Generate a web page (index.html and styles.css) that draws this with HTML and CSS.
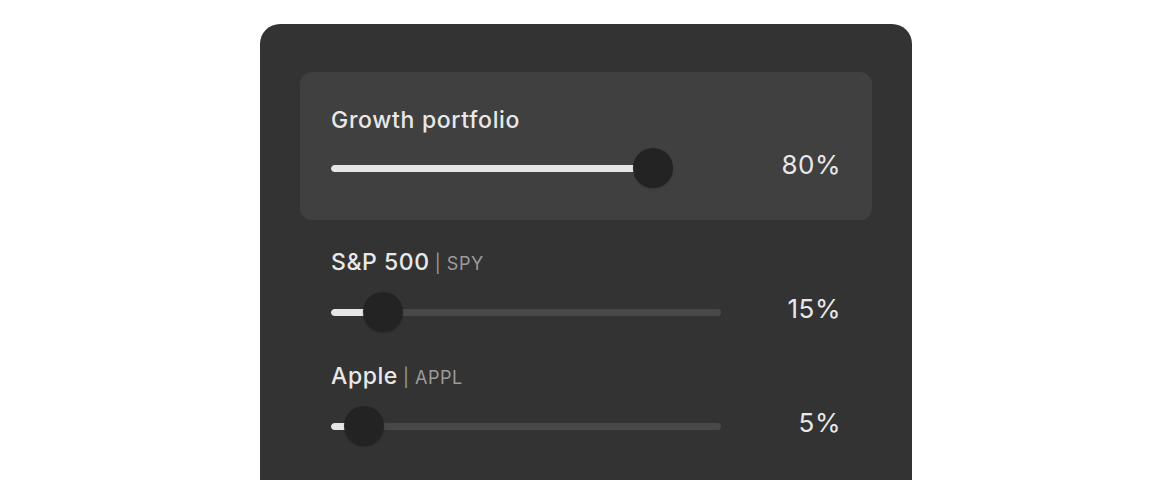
FILE: index.html
```html
<!DOCTYPE html>
<html>
<head>
<meta charset="utf-8">
<link rel="stylesheet" href="styles.css">
</head>
<body>
<div class="card">
  <div class="alloc alloc--active">
    <div class="alloc-title">Growth portfolio</div>
    <div class="alloc-body">
      <div class="slider">
        <div class="track"><div class="fill" style="width:322px"></div></div>
        <div class="thumb" style="left:302px"></div>
      </div>
      <div class="pct">80%</div>
    </div>
  </div>
  <div class="alloc">
    <div class="alloc-label"><span class="name">S&amp;P 500</span><span class="ticker">| SPY</span></div>
    <div class="alloc-body">
      <div class="slider">
        <div class="track"><div class="fill" style="width:52px"></div></div>
        <div class="thumb" style="left:32px"></div>
      </div>
      <div class="pct">15%</div>
    </div>
  </div>
  <div class="alloc">
    <div class="alloc-label"><span class="name">Apple</span><span class="ticker">| APPL</span></div>
    <div class="alloc-body">
      <div class="slider">
        <div class="track"><div class="fill" style="width:33px"></div></div>
        <div class="thumb" style="left:13px"></div>
      </div>
      <div class="pct">5%</div>
    </div>
  </div>
</div>
</body>
</html>
```

FILE: styles.css
```css
* { box-sizing: border-box; }
html, body { margin: 0; padding: 0; background: #ffffff; }
body {
  font-family: Inter, "Noto Sans", sans-serif;
  overflow: hidden;
  height: 480px;
}
.card {
  margin: 24px 0 0 260px;
  width: 652px;
  height: 456px;
  background: #333333;
  border-radius: 20px 20px 0 0;
  padding: 48px 40px 0;
  display: flex;
  flex-direction: column;
  gap: 28px;
}
.alloc {
  display: flex;
  flex-direction: column;
  gap: 14px;
  padding: 0 32px 0 31px;
}
.alloc:last-child { margin-top: 2px; }
.alloc--active {
  background: #404040;
  border-radius: 12px;
  padding: 34px 32px 32px 31px;
}
.alloc--active .track { background: #404040; }
.alloc-title {
  font-size: 23px;
  line-height: 28px;
  font-weight: 500;
  color: #e8e8e8;
  letter-spacing: 0.03em;
}
.alloc-label {
  display: flex;
  align-items: baseline;
  gap: 5px;
  line-height: 28px;
}
.name {
  font-size: 23px;
  font-weight: 500;
  color: #e8e8e8;
  letter-spacing: 0.025em;
}
.ticker {
  font-size: 18px;
  color: #9b9b9b;
  letter-spacing: 0.03em;
}
.alloc-body {
  display: flex;
  align-items: center;
  justify-content: space-between;
  height: 40px;
}
.slider {
  position: relative;
  width: 390px;
  height: 40px;
  display: flex;
  align-items: center;
}
.track {
  width: 100%;
  height: 7px;
  border-radius: 4px;
  background: #484848;
  overflow: hidden;
}
.fill {
  height: 100%;
  background: #e6e6e6;
  border-radius: 4px;
}
.thumb {
  position: absolute;
  top: 0;
  width: 40px;
  height: 40px;
  border-radius: 50%;
  background: #232323;
  box-shadow: 0 1px 2px rgba(0,0,0,0.2);
}
.pct {
  font-size: 26px;
  line-height: 32px;
  color: #e8e8e8;
  font-weight: 400;
  letter-spacing: 0.02em;
  margin-bottom: 6px;
  margin-right: -1px;
}
```
